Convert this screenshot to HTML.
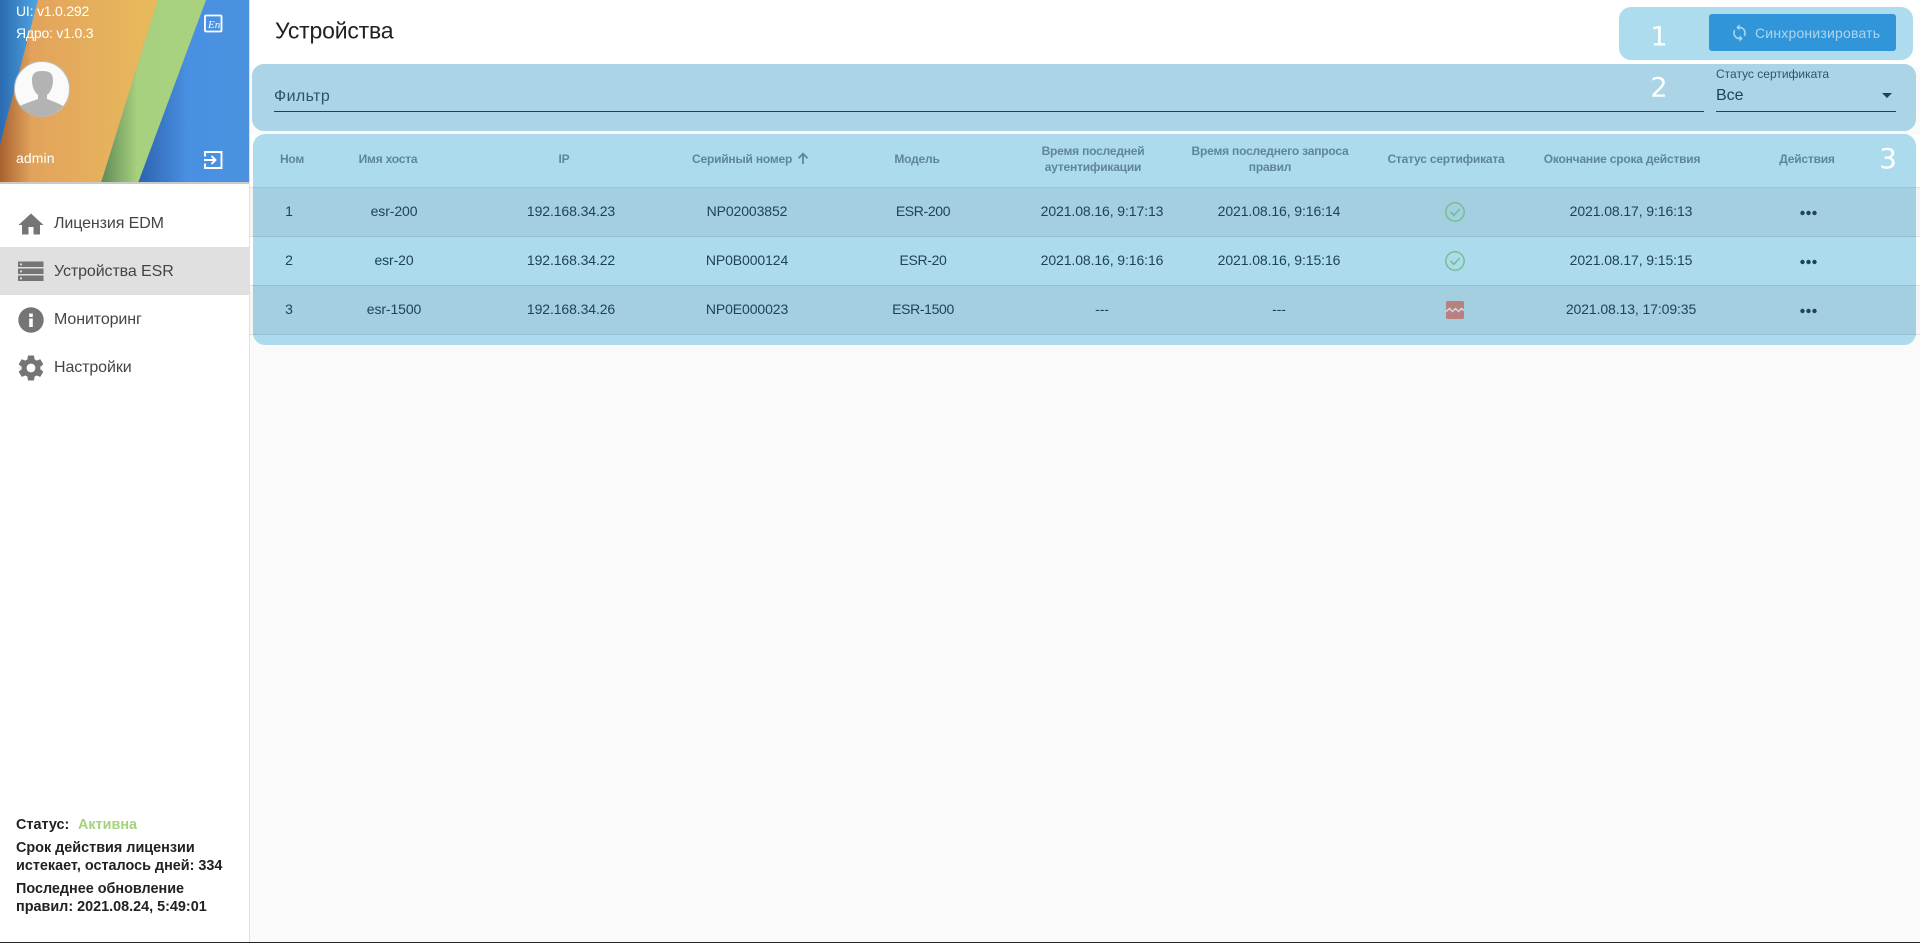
<!DOCTYPE html>
<html lang="ru"><head><meta charset="utf-8"><title>Устройства</title>
<style>
html,body{margin:0;padding:0;width:1920px;height:943px;overflow:hidden;background:#fafafa;font-family:"Liberation Sans","Noto Sans CJK SC",sans-serif}
*{box-sizing:border-box}
.a{position:absolute}
.c,.l{position:absolute;white-space:nowrap;line-height:1}
.c{transform:translate(-50%,-50%)}
.l{transform:translateY(-50%)}
#side{left:0;top:0;width:250px;height:942px;background:#fff;border-right:1px solid #e0e0e0}
.menu{font-size:16px;color:#444;left:54px;letter-spacing:-.1px}
.foot{font-size:14.4px;color:#212121;left:16px;font-weight:bold;letter-spacing:0}
.h{font-size:12px;color:#5f8599;font-weight:bold;letter-spacing:-.2px;text-align:center;line-height:16px}
.d{font-size:14px;color:#1f4258;letter-spacing:-.1px}
.row{left:0;width:1664px;height:49px;border-bottom:1px solid #96c0d2}
.num{font-family:"DejaVu Sans",sans-serif;color:#fff;font-size:27px}
</style></head><body>
<div class="a" style="left:0;top:0;width:1920px;height:67px;background:#fff"></div>

<!-- Sidebar -->
<div class="a" id="side">
<svg class="a" style="left:0;top:0" width="249" height="184" viewBox="0 0 249 184">
<defs>
<linearGradient id="g1" x1="0" y1="0" x2="1" y2="0"><stop offset="0" stop-color="#2d62ae"/><stop offset=".45" stop-color="#4a90e2"/><stop offset="1" stop-color="#4a92e0"/></linearGradient>
<linearGradient id="g2" x1="0" y1="0" x2="1" y2="0"><stop offset="0" stop-color="#a8622f"/><stop offset=".2" stop-color="#e2a35c"/><stop offset="1" stop-color="#e8bb5c"/></linearGradient>
<linearGradient id="g3" x1="0" y1="0" x2="1" y2="0"><stop offset="0" stop-color="#5f8a55"/><stop offset=".35" stop-color="#a8d17f"/><stop offset="1" stop-color="#a9d27f"/></linearGradient>
<linearGradient id="g4" x1="0" y1="0" x2="1" y2="0"><stop offset="0" stop-color="#2b6bb0"/><stop offset="1" stop-color="#4ea6e4"/></linearGradient>
</defs>
<rect width="249" height="183" fill="#4a92e0"/>
<polygon points="206,0 249,0 249,183 138,183" fill="url(#g1)"/>
<polygon points="0,0 38,0 0,145" fill="url(#g4)"/>
<polygon points="38,0 158,0 101,183 0,183 0,145" fill="url(#g2)"/>
<polygon points="158,0 206,0 138,183 101,183" fill="url(#g3)"/>
<rect y="182" width="249" height="2" fill="#c9c9c9"/>
<circle cx="42" cy="89" r="27.5" fill="#fafafa" stroke="#bdbdbd" stroke-width="1"/>
<path d="M20 106C26 103 33 101 38 99L38 95C34 92 32 86 32 80C32 73 36 71 42 71C49 71 53 73 53 80C53 86 51 92 47 95L47 99C52 101 58 103 63 106C57 113 50 116.500 42 116.500C33 116.500 26 113 20 106Z" fill="#b3b3b3"/>
<rect x="205" y="15.500" width="16.500" height="16" rx="1" fill="none" stroke="#fff" stroke-width="1.800"/>
<text x="208" y="28" font-family="Liberation Serif,serif" font-style="italic" font-size="11" fill="#fff">En</text>
<path d="M205 156.500V152h16.500v16H205v-4.500" fill="none" stroke="#fff" stroke-width="1.900"/>
<path d="M204 160h11M211.500 156l4 4-4 4" fill="none" stroke="#fff" stroke-width="1.900"/>
</svg>
<div class="l" style="left:16px;top:11px;font-size:14px;color:#fff;letter-spacing:-.2px">UI: v1.0.292</div>
<div class="l" style="left:16px;top:33px;font-size:14px;color:#fff;letter-spacing:-.2px">Ядро: v1.0.3</div>
<div class="l" style="left:16px;top:158px;font-size:14px;color:#fff;letter-spacing:.1px">admin</div>

<div class="a" style="left:0;top:247px;width:249px;height:48px;background:#e0e0e0"></div>
<svg class="a" style="left:18px;top:213px" width="26" height="22" viewBox="0 0 26 22"><path d="M13 .5L.5 12H4v9.500h6.500V14h5v7.500H22V12h3.500z" fill="#757575"/></svg>
<svg class="a" style="left:18px;top:261px" width="26" height="21" viewBox="0 0 26 21" fill="#757575"><path d="M0 .5h25.500v5.500H0zM0 7.500h25.500v5.500H0zM0 14.500h25.500v5.500H0z"/><rect x="2" y="2.500" width="2" height="1.800" fill="#ddd"/><rect x="2" y="9.500" width="2" height="1.800" fill="#ddd"/><rect x="2" y="16.500" width="2" height="1.800" fill="#ddd"/></svg>
<svg class="a" style="left:18px;top:307px" width="26" height="26" viewBox="0 0 26 26"><circle cx="13" cy="13" r="12.700" fill="#757575"/><rect x="11.200" y="11.500" width="3.600" height="8.500" fill="#fff"/><rect x="11.200" y="6.500" width="3.600" height="3.500" fill="#fff"/></svg>
<svg class="a" style="left:16px;top:353px" width="30" height="30" viewBox="0 0 24 24"><path fill="#757575" d="M19.430 12.980c.04-.32.07-.64.07-.98s-.03-.66-.07-.98l2.110-1.650c.19-.15.24-.42.12-.64l-2-3.460c-.12-.22-.39-.3-.61-.22l-2.490 1c-.52-.4-1.080-.73-1.690-.98l-.38-2.650A.488.488 0 0014 2h-4c-.25 0-.46.18-.49.42l-.38 2.650c-.61.25-1.170.59-1.690.98l-2.490-1c-.23-.09-.49 0-.61.22l-2 3.460c-.13.22-.07.49.12.64l2.110 1.650c-.04.32-.07.65-.07.98s.03.66.07.98l-2.110 1.650c-.19.15-.24.42-.12.64l2 3.460c.12.22.39.3.61.22l2.490-1c.52.4 1.080.73 1.690.98l.38 2.650c.03.24.24.42.49.42h4c.25 0 .46-.18.49-.42l.38-2.650c.61-.25 1.170-.59 1.690-.98l2.490 1c.23.09.49 0 .61-.22l2-3.460c.12-.22.07-.49-.12-.64l-2.110-1.650zM12 15.500c-1.930 0-3.500-1.570-3.500-3.500s1.570-3.500 3.500-3.500 3.500 1.570 3.500 3.500-1.570 3.500-3.500 3.500z"/></svg>
<div class="l menu" style="top:224px">Лицензия EDM</div>
<div class="l menu" style="top:272px">Устройства ESR</div>
<div class="l menu" style="top:320px">Мониторинг</div>
<div class="l menu" style="top:368px">Настройки</div>

<div class="l foot" style="top:825px">Статус:</div>
<div class="l foot" style="top:825px;left:78px;color:#a5d27c">Активна</div>
<div class="l foot" style="top:848px">Срок действия лицензии</div>
<div class="l foot" style="top:866px">истекает, осталось дней: 334</div>
<div class="l foot" style="top:889px">Последнее обновление</div>
<div class="l foot" style="top:907px">правил: 2021.08.24, 5:49:01</div>
</div>
<div class="a" style="left:0;top:942px;width:1920px;height:1px;background:#222"></div>

<!-- Title -->
<div class="l" style="left:275px;top:31px;font-size:23px;color:#212121;letter-spacing:-.2px">Устройства</div>

<!-- Panel 1 -->
<div class="a" style="left:1619px;top:7px;width:294px;height:53px;background:#addcee;border-radius:12px"></div>
<div class="a" style="left:1709px;top:14px;width:187px;height:37px;background:#3196d9;border-radius:3px"></div>
<svg class="a" style="left:1730px;top:23px" width="19" height="20" viewBox="0 0 24 24"><path fill="#add6ee" d="M12 4V1L8 5l4 4V6c3.310 0 6 2.690 6 6 0 1.010-.25 1.970-.7 2.800l1.460 1.460A7.930 7.930 0 0020 12c0-4.420-3.580-8-8-8zm0 14c-3.310 0-6-2.690-6-6 0-1.010.25-1.970.7-2.800L5.240 7.740A7.930 7.930 0 004 12c0 4.420 3.580 8 8 8v3l4-4-4-4v3z"/></svg>
<div class="l" style="left:1755px;top:33px;font-size:14px;color:#add6ee;letter-spacing:.2px">Синхронизировать</div>
<div class="c num" style="left:1659px;top:37px">1</div>

<!-- Panel 2 -->
<div class="a" style="left:252px;top:64px;width:1664px;height:67px;background:#abd4e6;border-radius:12px"></div>
<div class="l" style="left:274px;top:97px;font-size:16px;color:#2a5468;letter-spacing:.4px">Фильтр</div>
<div class="a" style="left:274px;top:111px;width:1430px;height:1px;background:#1d4356"></div>
<div class="l" style="left:1716px;top:74px;font-size:12px;color:#2f5468;letter-spacing:0">Статус сертификата</div>
<div class="l" style="left:1716px;top:96px;font-size:16px;color:#1f4258">Все</div>
<div class="a" style="left:1882px;top:93px;width:0;height:0;border-left:5px solid transparent;border-right:5px solid transparent;border-top:5px solid #1f4258"></div>
<div class="a" style="left:1716px;top:111px;width:180px;height:1px;background:#1d4356"></div>
<div class="c num" style="left:1659px;top:88px">2</div>

<!-- Table underlay (outside panel) -->
<div class="a" style="left:250px;top:135px;width:1670px;height:52px;background:#fff"></div>
<div class="a" style="left:250px;top:187px;width:1670px;height:50px;background:#f5f5f5;border-bottom:1px solid #e0e0e0;border-top:1px solid #e0e0e0"></div>
<div class="a" style="left:250px;top:237px;width:1670px;height:49px;background:#fff;border-bottom:1px solid #e0e0e0"></div>
<div class="a" style="left:250px;top:286px;width:1670px;height:49px;background:#f5f5f5;border-bottom:1px solid #e0e0e0"></div>

<!-- Panel 3 -->
<div class="a" style="left:253px;top:134px;width:1663px;height:211px;background:#addbee;border-radius:12px;overflow:hidden">
<div class="a" style="left:0;top:53px;width:1663px;height:1px;background:#9cc7d9"></div>
<div class="a row" style="top:54px;background:#a4cfe0"></div>
<div class="a row" style="top:103px;background:#addbee"></div>
<div class="a row" style="top:152px;background:#a4cfe0"></div>
</div>
<div class="c num" style="left:1888px;top:159px;font-size:28px">3</div>

<div class="c h" style="left:292px;top:158.500px">Ном</div>
<div class="c h" style="left:388px;top:158.500px">Имя хоста</div>
<div class="c h" style="left:564px;top:158.500px">IP</div>
<div class="l h" style="left:692px;top:158.500px">Серийный номер</div>
<svg class="a" style="left:797px;top:152px" width="12" height="13" viewBox="0 0 12 13"><path d="M6 12V2M1.500 6.300L6 1.800l4.500 4.500" fill="none" stroke="#5f8599" stroke-width="1.800"/></svg>
<div class="c h" style="left:917px;top:158.500px">Модель</div>
<div class="c h" style="left:1093px;top:159px">Время последней<br>аутентификации</div>
<div class="c h" style="left:1270px;top:159px">Время последнего запроса<br>правил</div>
<div class="c h" style="left:1446px;top:158.500px">Статус сертификата</div>
<div class="c h" style="left:1622px;top:158.500px">Окончание срока действия</div>
<div class="c h" style="left:1807px;top:158.500px">Действия</div>

<div class="c d" style="left:289px;top:211px">1</div><div class="c d" style="left:394px;top:211px">esr-200</div><div class="c d" style="left:571px;top:211px">192.168.34.23</div><div class="c d" style="left:747px;top:211px">NP02003852</div><div class="c d" style="left:923px;top:211px;letter-spacing:-.35px">ESR-200</div><div class="c d" style="left:1102px;top:211px">2021.08.16, 9:17:13</div><div class="c d" style="left:1279px;top:211px">2021.08.16, 9:16:14</div><div class="c d" style="left:1631px;top:211px">2021.08.17, 9:16:13</div>
<div class="c d" style="left:289px;top:260px">2</div><div class="c d" style="left:394px;top:260px">esr-20</div><div class="c d" style="left:571px;top:260px">192.168.34.22</div><div class="c d" style="left:747px;top:260px">NP0B000124</div><div class="c d" style="left:923px;top:260px;letter-spacing:-.35px">ESR-20</div><div class="c d" style="left:1102px;top:260px">2021.08.16, 9:16:16</div><div class="c d" style="left:1279px;top:260px">2021.08.16, 9:15:16</div><div class="c d" style="left:1631px;top:260px">2021.08.17, 9:15:15</div>
<div class="c d" style="left:289px;top:309px">3</div><div class="c d" style="left:394px;top:309px">esr-1500</div><div class="c d" style="left:571px;top:309px">192.168.34.26</div><div class="c d" style="left:747px;top:309px">NP0E000023</div><div class="c d" style="left:923px;top:309px;letter-spacing:-.35px">ESR-1500</div><div class="c d" style="left:1102px;top:309px">---</div><div class="c d" style="left:1279px;top:309px">---</div><div class="c d" style="left:1631px;top:309px">2021.08.13, 17:09:35</div>

<svg class="a" style="left:1444px;top:201px" width="22" height="22" viewBox="0 0 22 22"><circle cx="11" cy="11" r="9.200" fill="none" stroke="#74c08f" stroke-width="1.500"/><path d="M6.500 11l3.300 3.300 6-6.300" fill="none" stroke="#74c08f" stroke-width="1.600"/></svg>
<svg class="a" style="left:1444px;top:250px" width="22" height="22" viewBox="0 0 22 22"><circle cx="11" cy="11" r="9.200" fill="none" stroke="#74c08f" stroke-width="1.500"/><path d="M6.500 11l3.300 3.300 6-6.300" fill="none" stroke="#74c08f" stroke-width="1.600"/></svg>
<svg class="a" style="left:1446px;top:301px" width="18" height="18" viewBox="0 0 18 18"><rect width="18" height="18" rx="1.500" fill="#ba8080"/><path d="M0 10.500l3.500-3 3 3 3-3 3 3 3-3 2.500 2" fill="none" stroke="#c9dbe4" stroke-width="1.500"/></svg>

<svg class="a" style="left:1800px;top:209px" width="17" height="8"><circle cx="2.500" cy="4" r="2.200" fill="#1f4258"/><circle cx="8.500" cy="4" r="2.200" fill="#1f4258"/><circle cx="14.500" cy="4" r="2.200" fill="#1f4258"/></svg>
<svg class="a" style="left:1800px;top:258px" width="17" height="8"><circle cx="2.500" cy="4" r="2.200" fill="#1f4258"/><circle cx="8.500" cy="4" r="2.200" fill="#1f4258"/><circle cx="14.500" cy="4" r="2.200" fill="#1f4258"/></svg>
<svg class="a" style="left:1800px;top:307px" width="17" height="8"><circle cx="2.500" cy="4" r="2.200" fill="#1f4258"/><circle cx="8.500" cy="4" r="2.200" fill="#1f4258"/><circle cx="14.500" cy="4" r="2.200" fill="#1f4258"/></svg>
</body></html>
